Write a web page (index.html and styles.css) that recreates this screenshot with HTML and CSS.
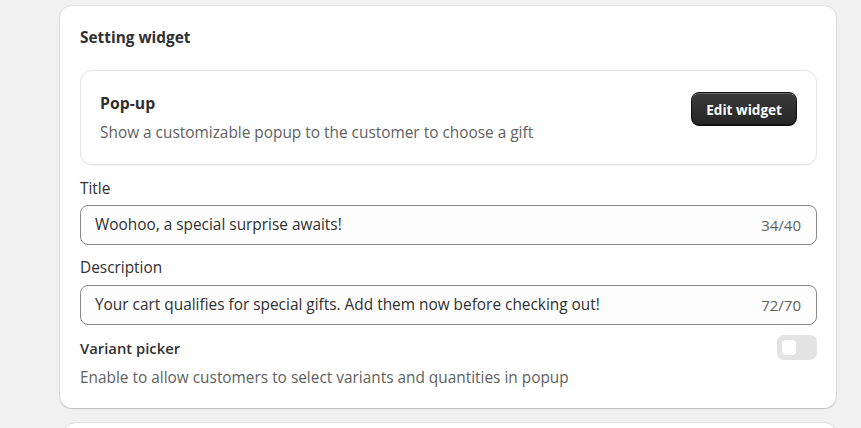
FILE: index.html
```html
<!DOCTYPE html>
<html>
<head>
<meta charset="utf-8">
<link rel="stylesheet" href="styles.css">
</head>
<body>
<div class="page">
  <section class="card">
    <h2 class="card-title">Setting widget</h2>
    <div class="widget-box">
      <div class="widget-info">
        <div class="widget-name">Pop-up</div>
        <div class="widget-desc">Show a customizable popup to the customer to choose a gift</div>
      </div>
      <button class="btn-dark">Edit widget</button>
    </div>
    <div class="field">
      <label class="field-label">Title</label>
      <div class="input">
        <span class="input-value">Woohoo, a special surprise awaits!</span>
        <span class="input-count">34/40</span>
      </div>
    </div>
    <div class="field">
      <label class="field-label">Description</label>
      <div class="input">
        <span class="input-value">Your cart qualifies for special gifts. Add them now before checking out!</span>
        <span class="input-count">72/70</span>
      </div>
    </div>
    <div class="toggle-row">
      <div class="toggle-text">
        <div class="toggle-title">Variant picker</div>
        <div class="toggle-desc">Enable to allow customers to select variants and quantities in popup</div>
      </div>
      <span class="toggle"><span class="knob"></span></span>
    </div>
  </section>
  <section class="card next-card"></section>
</div>
</body>
</html>
```

FILE: styles.css
```css
* { box-sizing: border-box; }
html, body { margin: 0; padding: 0; }
body {
  background: #f1f1f1;
  font-family: "Open Sans", "Noto Sans", sans-serif;
  color: #303030;
  font-size: 15.4px;
  line-height: 20px;
  overflow: hidden;
  height: 428px;
}
.page {
  padding: 6px 25px 0 60px;
  display: flex;
  flex-direction: column;
  gap: 15px;
}
.card {
  width: 776px;
  background: #fff;
  border-radius: 12px;
  box-shadow: 0 1px 0 0 rgba(26,26,26,0.07), 0 0 0 1px rgba(0,0,0,0.06), 0 1px 2px rgba(0,0,0,0.12);
  padding: 22px 19px 20px 20px;
  display: flex;
  flex-direction: column;
}
.next-card { height: 40px; margin-left: 4px; width: 772px; }
.card-title {
  margin: 0;
  font-size: 15.4px;
  font-weight: 700;
  line-height: 20px;
}
.widget-box {
  margin-top: 22px;
  border: 1px solid #e3e3e3;
  border-radius: 12px;
  padding: 22px 19px 21px 19px;
  display: flex;
  justify-content: space-between;
  align-items: flex-start;
  box-shadow: 0 1px 1px rgba(0,0,0,0.05);
}
.widget-name { font-weight: 700; font-size: 15.8px; }
.widget-desc { margin-top: 10px; color: #616161; }
.btn-dark {
  font-family: inherit;
  background: linear-gradient(#3a3a3a, #262626);
  color: #fff;
  border: 1px solid #111;
  border-radius: 8px;
  height: 34px;
  padding: 0 14px;
  margin-top: -1px;
  font-size: 13.6px;
  font-weight: 700;
  box-shadow: inset 0 1px 0 rgba(255,255,255,0.25), inset 0 -1px 0 rgba(0,0,0,0.5);
}
.field { margin-top: 14px; display: flex; flex-direction: column; gap: 6px; }
.field + .field { margin-top: 13px; gap: 7px; }
.input {
  height: 40px;
  border: 1px solid #8a8a8a;
  border-radius: 8px;
  background: #fdfdfd;
  display: flex;
  align-items: center;
  justify-content: space-between;
  padding: 0 15px 0 14px;
}
.input-count { color: #616161; font-size: 15px; }
.toggle-row {
  margin-top: 13px;
  display: flex;
  justify-content: space-between;
  align-items: flex-start;
}
.toggle-title { font-weight: 600; font-size: 14.8px; }
.toggle-desc { margin-top: 10px; color: #616161; }
.toggle {
  width: 40px;
  height: 25px;
  margin-top: -3px;
  border-radius: 7px;
  background: #e3e3e3;
  display: flex;
  align-items: center;
  padding-left: 5px;
}
.knob {
  width: 14px;
  height: 15px;
  background: #fff;
  border-radius: 4px;
}
```
